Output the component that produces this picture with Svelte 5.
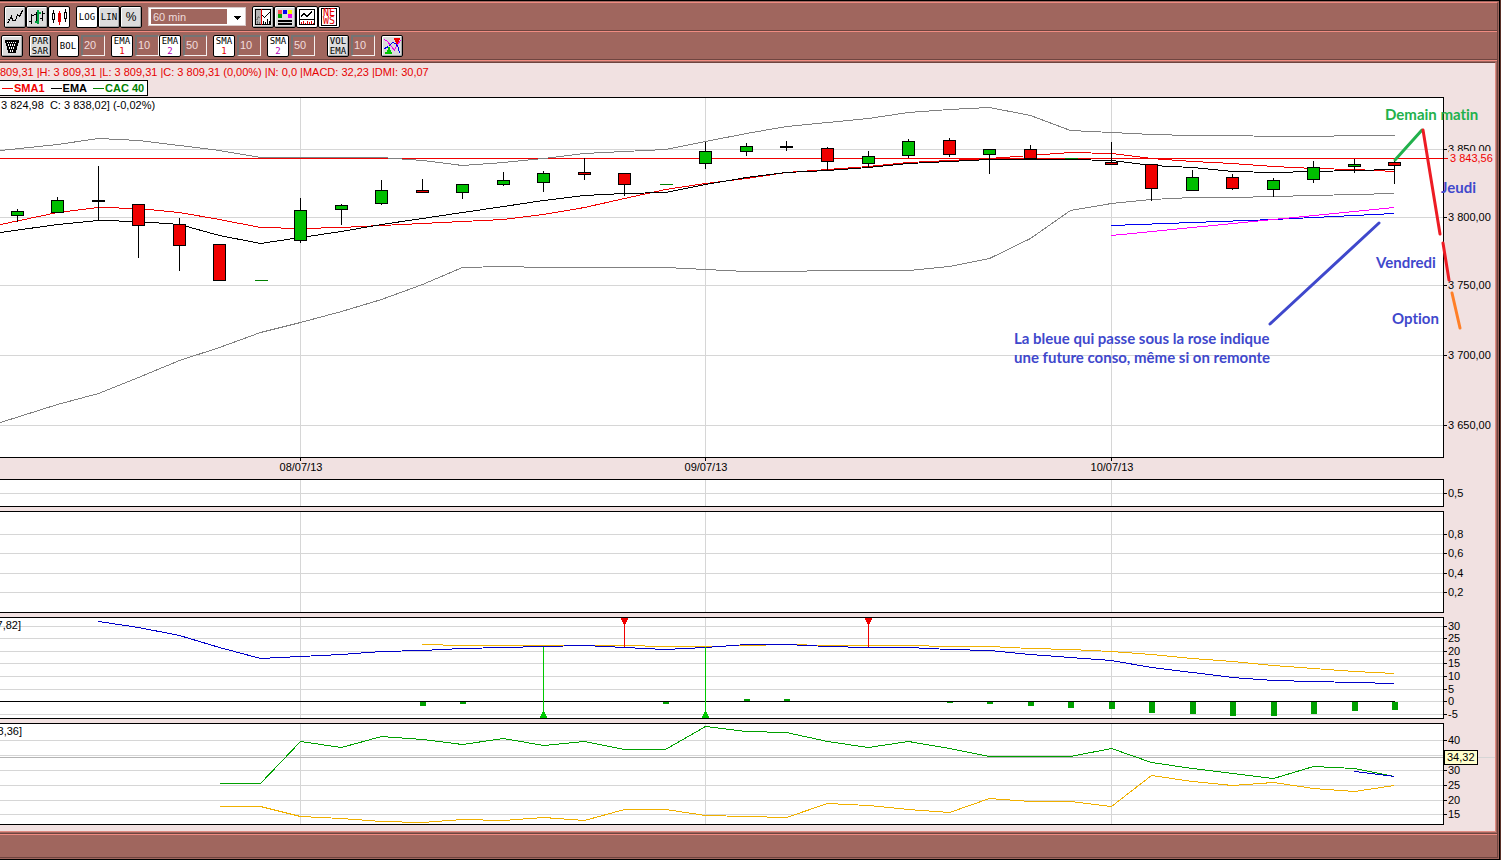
<script>
  let interval = '60 min';
  let scale = 'LOG';
  let style = 'candles';

  const styles = ['line', 'bars', 'candles'];
  const scales = ['LOG', 'LIN', '%'];
  const tools = ['crosshair', 'colors', 'volume', 'news'];

  let indicatorGroups = [
    [{ id: 'bol', lines: ['BOL'], on: true, value: '20' }],
    [
      { id: 'ema1', lines: ['EMA', '1'], color: '#e60000', on: true, value: '10' },
      { id: 'ema2', lines: ['EMA', '2'], color: '#b400b4', on: true, value: '50' }
    ],
    [{ id: 'sma1', lines: ['SMA', '1'], color: '#e60000', on: true, value: '10' }],
    [{ id: 'sma2', lines: ['SMA', '2'], color: '#b400b4', on: true, value: '50' }],
    [{ id: 'vol', lines: ['VOL', 'EMA'], on: false, value: '10', spaced: true }]
  ];

  const days = [
    { x: 300, label: '08/07/13' },
    { x: 705, label: '09/07/13' },
    { x: 1111, label: '10/07/13' }
  ];

  // one x for each hourly bar
  const xs = [
    17, 57, 98, 138, 179, 219, 260, 300, 341, 381, 422, 462, 503, 543, 584, 624, 665, 705,
    746, 786, 827, 868, 908, 949, 989, 1030, 1070, 1111, 1151, 1192, 1232, 1273, 1313, 1354, 1394
  ];

  // high, body top, body bottom, low, kind (u = up, d = down, n = doji, f = flat)
  const candles = [
    [209, 211, 215, 221, 'u'], [197, 200, 212, 212, 'u'], [166, 200, 201, 220, 'n'],
    [204, 204, 225, 257, 'd'], [218, 224, 245, 270, 'd'], [244, 244, 280, 280, 'd'],
    [280, 280, 280, 280, 'f'], [198, 210, 240, 242, 'u'], [204, 205, 209, 224, 'u'],
    [180, 190, 203, 204, 'u'], [179, 190, 192, 192, 'd'], [184, 184, 192, 198, 'u'],
    [172, 180, 184, 185, 'u'], [171, 173, 182, 191, 'u'], [158, 172, 174, 179, 'd'],
    [173, 173, 184, 195, 'd'], [184, 184, 184, 184, 'f'], [142, 151, 163, 168, 'u'],
    [143, 146, 151, 155, 'u'], [141, 146, 147, 150, 'n'], [147, 148, 161, 169, 'd'],
    [151, 156, 163, 166, 'u'], [139, 141, 155, 157, 'u'], [138, 140, 154, 156, 'd'],
    [149, 149, 154, 173, 'u'], [145, 149, 158, 158, 'd'], [158, 158, 158, 158, 'f'],
    [142, 162, 164, 164, 'd'], [164, 164, 188, 200, 'd'], [170, 177, 190, 190, 'u'],
    [174, 177, 188, 189, 'd'], [178, 180, 189, 196, 'u'], [161, 167, 179, 182, 'u'],
    [159, 164, 166, 172, 'u'], [160, 162, 165, 183, 'd']
  ];

  // values run along xs, starting at the given bar
  function series(start, values, lead = '') {
    return lead + ' ' + values.map((y, i) => `${xs[start + i]},${y}`).join(' ');
  }

  const upperBand = series(1, [
    144, 138, 140, 145, 150, 157, 157, 157, 157, 160, 165, 162, 158, 153, 151, 149, 141, 133,
    126, 122, 118, 112, 109, 107, 115, 130, 132, 134, 135, 135, 136, 136, 135, 135
  ], '0,150');
  const lowerBand = series(1, [
    404, 393, 377, 360, 347, 332, 322, 311, 299, 284, 267, 266, 267, 267, 267, 267, 269, 271,
    271, 270, 270, 270, 266, 258, 238, 210, 203, 199, 197, 197, 196, 195, 194, 193
  ], '0,422');
  const sma = series(1, [
    212, 207, 208, 212, 219, 227, 228, 227, 225, 223, 221, 219, 214, 207, 198, 189, 183, 178,
    172, 169, 166, 162, 160, 158, 155, 152, 153, 158, 161, 163, 166, 168, 169, 171
  ], '0,224');
  const ema = series(1, [
    224, 220, 221, 224, 235, 243, 237, 231, 224, 218, 212, 206, 200, 195, 193, 192, 184, 177,
    172, 170, 167, 163, 161, 159, 159, 159, 160, 165, 167, 171, 172, 171, 170, 169
  ], '0,232');

  const macd = series(2, [
    621, 627, 635, 647, 658, 656, 654, 651, 650, 648, 647, 646, 645, 647, 649, 647, 644, 644,
    646, 647, 647, 649, 650, 654, 657, 660, 667, 672, 677, 680, 681, 682, 683
  ]);
  const signal = series(10, [
    644, 645, 645, 645, 645, 645, 646, 646, 645, 644, 645, 645, 645, 646, 646, 648, 649, 651,
    654, 658, 661, 665, 668, 671, 673
  ]);
  const histogram = [
    [422, 702, 4], [462, 702, 2], [665, 702, 2], [746, 699, 2], [786, 699, 2], [949, 702, 1],
    [989, 702, 2], [1030, 702, 4], [1070, 702, 6], [1111, 702, 7], [1151, 702, 11],
    [1192, 702, 12], [1232, 702, 14], [1273, 702, 14], [1313, 702, 12], [1354, 702, 9],
    [1394, 702, 8]
  ];

  const diPlus = series(5, [
    783, 783, 741, 747, 736, 739, 744, 738, 745, 741, 749, 749, 726, 731, 732, 741, 747, 741,
    748, 756, 756, 756, 748, 762, 768, 773, 778, 766, 768, 776
  ]);
  const diMinus = series(5, [
    806, 806, 816, 818, 821, 822, 819, 820, 817, 820, 809, 809, 815, 816, 817, 803, 805, 809,
    812, 798, 801, 801, 806, 775, 781, 785, 782, 788, 791, 785
  ]);

  const panes = [
    {
      id: 'price', top: 97, height: 361,
      ticks: [[149, '3 850,00'], [217, '3 800,00'], [285, '3 750,00'], [355, '3 700,00'], [425, '3 650,00']]
    },
    { id: 'volume', top: 479, height: 28, ticks: [[493, '0,5']] },
    { id: 'empty', top: 511, height: 102, ticks: [[534, '0,8'], [553, '0,6'], [573, '0,4'], [592, '0,2']] },
    {
      id: 'macd', top: 617, height: 102,
      ticks: [[626, '30'], [638, '25'], [651, '20'], [663, '15'], [676, '10'], [689, '5'], [701, '0'], [714, '-5']]
    },
    {
      id: 'dmi', top: 723, height: 102,
      ticks: [[740, '40'], [755, ''], [770, '30'], [785, '25'], [800, '20'], [814, '15']]
    }
  ];

  function toggle(item) {
    item.on = !item.on;
    indicatorGroups = indicatorGroups;
  }
</script>

<div class="window">
  <div class="frame">
    <div class="toolbar">
      <div class="buttons">
        {#each styles as name}
          <button type="button" class:on={style === name} aria-label={name} on:click={() => (style = name)}>
            <svg width="20" height="20" shape-rendering="crispEdges" fill="none" stroke="#000">
              {#if name === 'line'}
                <path d="M2.5 16.5L6.5 9.5L7.5 13.5L10.5 13.5L12.5 7.5L14.5 9.5L17.5 3.5M2.5 12.5L4.5 12.5" />
              {:else if name === 'bars'}
                <path d="M4.5 7v10M2 14.5h2M5 8.5h2M9.5 5v11M7 7.5h2M15.5 4v10M13 11.5h2M16 6.5h2" />
                <path d="M11 3v14M8 14.5h3M11 5.5h3" stroke="#00a040" stroke-width="2" />
              {:else}
                <path d="M4.5 3v13M16.5 2v13" />
                <path d="M3.5 6.5h2v6h-2zM15.5 5.5h2v6h-2z" fill="#fff" />
                <path d="M10.5 4v14" stroke="#e60000" />
                <path d="M9.5 6.5h2v8h-2z" stroke="#e60000" fill="#e60000" />
              {/if}
            </svg>
          </button>
        {/each}
      </div>
      <div class="buttons">
        {#each scales as name}
          <button type="button" class:on={scale === name} class:percent={name === '%'} on:click={() => (scale = name)}>{name}</button>
        {/each}
      </div>
      <label class="interval">
        <select bind:value={interval} aria-label="Interval">
          <option>5 min</option>
          <option>15 min</option>
          <option>60 min</option>
        </select>
        <svg width="18" height="16" shape-rendering="crispEdges"><path d="M6 7h8l-4 4z" /></svg>
      </label>
      <div class="buttons">
        {#each tools as name}
          <button type="button" class:on={name === 'volume' || name === 'news'} aria-label={name}>
            {#if name === 'news'}
              <span class="news">NE<br />WS</span>
            {:else}
              <svg width="20" height="20" shape-rendering="crispEdges" fill="none" stroke="#000">
                {#if name === 'crosshair'}
                  <path d="M2.5 2.5h15v15h-15z" fill="#fff" />
                  <path d="M3 3h5v14h-5z" fill="#b4b4b4" stroke="none" />
                  <path d="M3.5 13.5l2-4 2 2M4.5 14v3M6.5 15v2" stroke="#777" />
                  <path d="M8.5 2v16" stroke="#e60000" />
                  <path d="M9.5 8.5l2 2 5-5M10.5 14v3M12.5 15v2M14.5 12v5M16.5 14v3" />
                {:else if name === 'colors'}
                  <g stroke="none">
                    <path d="M3 3h4v4h-4z" fill="#ff5050" />
                    <path d="M8 3h4v4h-4z" fill="#0000f0" />
                    <path d="M13 3h4v4h-4z" fill="#f5f500" />
                    <path d="M3 7h4v4h-4z" fill="#00a000" />
                    <path d="M13 7h4v4h-4z" fill="#f000f0" />
                  </g>
                  <path d="M3 14h14M3 17h14" stroke-width="2" />
                {:else}
                  <path d="M2.5 2.5h15v15h-15zM2 12.5h16" />
                  <path d="M4 9.5l3-3 3 3 5-5" />
                  <path d="M4.5 15v2M6.5 14v3M8.5 16v1M10.5 14v3M12.5 15v2M14.5 14v3M16.5 16v1" stroke="#e60000" />
                {/if}
              </svg>
            {/if}
          </button>
        {/each}
      </div>
    </div>

    <div class="toolbar second">
      <button type="button" aria-label="Indicators">
        <svg width="20" height="20" shape-rendering="crispEdges">
          <path d="M3 4h14v3h-1v3h-1v4h-1v3h-8v-3h-1v-4h-1v-3h-1z" />
          <path d="M5 6.5h10M6 9.5h8M7 12.5h6M8 15.5h4" stroke="#fff" stroke-dasharray="1 1" />
          <path d="M6 8h8M7 11h6M8 14h4" stroke="#fff" stroke-dasharray="1 1" />
        </svg>
      </button>
      <button type="button"><span>PAR</span><span>SAR</span></button>
      {#each indicatorGroups as group}
        <div class="buttons" class:spaced={group[0].spaced}>
          {#each group as item (item.id)}
            <div class="indicator">
              <button type="button" class:on={item.on} on:click={() => toggle(item)}>
                <span>{item.lines[0]}</span>
                {#if item.lines[1]}<span style:color={item.color}>{item.lines[1]}</span>{/if}
              </button>
              <input type="text" bind:value={item.value} aria-label={`${item.lines.join(' ')} period`} />
            </div>
          {/each}
        </div>
      {/each}
      <button type="button" aria-label="Signals">
        <svg width="20" height="20" shape-rendering="crispEdges" fill="none">
          <path d="M2.5 3.5l3 2 4 5 3 4 2-5 4-5" stroke="#f000f0" />
          <path d="M2.5 12.5l4-2 4-4 3 1 3 4 1 6" stroke="#0000f0" />
          <path d="M12 2h6v2h-1v2h-1v2h-2v-2h-1v-2h-1z" fill="#f00000" />
          <path d="M3 18h7v-2h-1v-2h-1v-3h-2v3h-1v2h-2z" fill="#00c800" />
        </svg>
      </button>
    </div>

    <div class="desk">
      <div class="charts">
        <div class="info">809,31 |H: 3 809,31 |L: 3 809,31 |C: 3 809,31 (0,00%) |N: 0,0 |MACD: 32,23 |DMI: 30,07</div>
        <div class="legend">
          <span class="sma">SMA1</span>
          <span class="ema">EMA</span>
          <span class="cac">CAC 40</span>
        </div>

        {#each panes as pane (pane.id)}
          <div class="pane" style:height={`${pane.height}px`}>
            <svg class="plot">
              <g transform={`translate(0 ${-pane.top - 1})`} shape-rendering="crispEdges">
                <g transform="translate(0.5 0.5)" fill="none">
                  <g class="grid">
                    {#each pane.ticks as [y]}
                      <line x1="-1" x2="100%" y1={y} y2={y} />
                    {/each}
                    {#each days as day}
                      <line x1={day.x} x2={day.x} y1={pane.top} y2={pane.top + pane.height} />
                    {/each}
                  </g>

                  {#if pane.id === 'price'}
                    <line x1="-1" x2="100%" y1="158" y2="158" stroke="#f00000" />
                    <polyline points={upperBand} stroke="#808080" />
                    <polyline points={lowerBand} stroke="#808080" />
                    <polyline points={sma} stroke="#f00000" />
                    <polyline points={ema} stroke="#000" />
                    <polyline points="1111,225 1273,219 1394,213" stroke="#0000f0" />
                    <polyline points="1111,235 1273,219 1394,207" stroke="#f0f" />
                    {#each candles as [high, top, bottom, low, kind], i}
                      {#if kind === 'f'}
                        <line x1={xs[i] - 6} x2={xs[i] + 7} y1={top} y2={top} stroke="#008000" />
                      {:else}
                        <path d={`M${xs[i]} ${high - 0.5}V${low + 0.5}`} stroke="#000" />
                        <rect class={kind} x={xs[i] - 6} y={top} width="12" height={bottom - top} stroke="#000" />
                      {/if}
                    {/each}
                  {:else if pane.id === 'macd'}
                    <line x1="-1" x2="1394" y1="701" y2="701" stroke="#000" />
                    <polyline points={signal} stroke="#f0b000" />
                    <polyline points={macd} stroke="#0000c8" />
                    <g stroke="#00c800" fill="#00c800">
                      <path d="M543 646V717M540 717h6l-2 -5h-2z" />
                      <path d="M705 646V717M702 717h6l-2 -5h-2z" />
                    </g>
                    <g stroke="#f00000" fill="#f00000">
                      <path d="M624 618V646M621 618h6l-2 5h-2z" />
                      <path d="M868 618V646M865 618h6l-2 5h-2z" />
                    </g>
                  {:else if pane.id === 'dmi'}
                    <line x1="-1" x2="100%" y1="757" y2="757" stroke="#b4b4b4" />
                    <polyline points={diPlus} stroke="#00a000" />
                    <polyline points={diMinus} stroke="#f0b000" />
                    <polyline points="1354,771 1394,776" stroke="#0000c8" />
                  {/if}
                </g>
                {#if pane.id === 'macd'}
                  {#each histogram as [x, y, h]}
                    <rect x={x - 2} {y} width="6" height={h} fill="#00a000" />
                  {/each}
                {/if}
              </g>
              {#if pane.id === 'price'}
                <text x="1" y="11" xml:space="preserve">3 824,98  C: 3 838,02] (-0,02%)</text>
              {:else if pane.id === 'macd'}
                <text x="21" y="11" text-anchor="end">7,82]</text>
              {:else if pane.id === 'dmi'}
                <text x="22" y="11" text-anchor="end">8,36]</text>
              {/if}
            </svg>
            <svg class="axis">
              <g transform={`translate(0 ${-pane.top})`}>
                {#each pane.ticks as [y, label]}
                  {#if label}
                    <rect {y} width="3" height="1" />
                    <text x="4" y={y + 4}>{label}</text>
                  {/if}
                {/each}
                {#if pane.id === 'price'}
                  <rect x="5" y="151" width="46" height="14" fill="#f1e1e1" />
                  <rect y="158" width="4" height="1" fill="#f00000" />
                  <text x="6" y="162" class="last">3 843,56</text>
                {:else if pane.id === 'dmi'}
                  <rect y="757" width="51" height="1" fill="#d6d6d6" />
                  <rect x="0.5" y="750.5" width="33" height="14" fill="#ffc" stroke="#000" />
                  <text x="3" y="761">34,32</text>
                {/if}
              </g>
            </svg>

            {#if pane.id === 'price'}
              <svg class="notes">
                <g transform="translate(0 -97)" fill="none" stroke-width="3" stroke-linecap="round">
                  <path d="M1395 160L1422 130" stroke="#22b14c" />
                  <path d="M1423 130L1440 234M1443 243L1449 280" stroke="#ed1c24" />
                  <path d="M1452 293L1460 328" stroke="#ff7f27" />
                  <path d="M1270 324L1379 223" stroke="#3f48cc" />
                </g>
                <g transform="translate(0 -97)" fill="#3f48cc">
                  <text x="1385" y="120" fill="#22b14c">Demain matin</text>
                  <text x="1441" y="193">Jeudi</text>
                  <text x="1376" y="268">Vendredi</text>
                  <text x="1392" y="324">Option</text>
                  <text x="1014" y="344">La bleue qui passe sous la rose indique</text>
                  <text x="1014" y="363">une future conso, même si on remonte</text>
                </g>
              </svg>
            {/if}
          </div>

          {#if pane.id === 'price'}
            <svg class="dates">
              {#each days as day}
                <rect x={day.x} width="1" height="3" />
                <text x={day.x + 1} y="13" text-anchor="middle">{day.label}</text>
              {/each}
            </svg>
          {/if}
        {/each}
      </div>
    </div>
    <div class="footer"></div>
  </div>
</div>

<style>
  :global(body) {
    background: #5a3228;
  }

  .window {
    box-sizing: border-box;
    display: flex;
    min-height: 100vh;
    margin-right: 1px;
    padding: 1px 1px 1px 0;
    border: 1px solid #000;
    border-left: none;
    background: #a0665e;
    color: #000;
    font: 11px/14px 'Liberation Sans', Arial, sans-serif;
  }

  .frame {
    flex: 1;
    min-width: 0;
    display: flex;
    flex-direction: column;
    border-top: 1px solid #f08c82;
    border-right: 1px solid #6e443f;
    border-bottom: 1px solid #6e443f;
  }

  .toolbar {
    display: flex;
    align-items: center;
    gap: 6px;
    height: 27px;
    padding-left: 4px;
    border-bottom: 1px solid #6e443f;
  }

  .toolbar.second {
    padding-left: 1px;
    border-top: 1px solid #f08c82;
  }

  .buttons,
  .indicator {
    display: flex;
    align-items: center;
  }

  .indicator {
    gap: 2px;
  }

  .spaced {
    margin-left: 6px;
  }

  button {
    box-sizing: border-box;
    display: flex;
    flex-direction: column;
    align-items: center;
    justify-content: center;
    width: 22px;
    height: 22px;
    padding: 0;
    border: 1px solid #000;
    border-radius: 2px;
    background: #dcdcdc;
    box-shadow: inset 1px 1px #fff, inset -1px -1px #a8a8a8;
    color: #000;
    font: 9px/10px 'DejaVu Sans Mono', monospace;
  }

  button.on {
    background: #fff;
    box-shadow: none;
  }

  .buttons button.percent {
    font: 12px/14px 'Liberation Sans', Arial, sans-serif;
  }

  button svg {
    flex: none;
  }

  .news {
    box-sizing: border-box;
    width: 16px;
    border: 1px solid #000;
    color: #e60000;
    font: 10px/8px 'DejaVu Sans Mono', monospace;
  }

  input {
    box-sizing: border-box;
    width: 24px;
    height: 21px;
    padding: 0 0 2px 1px;
    border: 2px solid;
    border-color: #747474 #f5f0f0 #f5f0f0 #747474;
    border-width: 2px 1px 1px 2px;
    border-radius: 0;
    background: #a0665e;
    color: #f0dcdc;
    font: 11px 'Liberation Sans', Arial, sans-serif;
  }

  .interval {
    display: flex;
    align-items: center;
    box-sizing: border-box;
    height: 19px;
    padding: 0 0 0 2px;
    border: 1px solid #d8c8c8;
    background: #fff;
  }

  select {
    width: 76px;
    height: 15px;
    padding: 0 0 0 2px;
    border: none;
    border-radius: 0;
    appearance: none;
    background: #a0665e;
    color: #f0dcdc;
    font: 11px 'Liberation Sans', Arial, sans-serif;
  }

  .desk {
    padding: 1px 1px 1px 0;
    border-top: 1px solid #f08c82;
    border-bottom: 1px solid #6e443f;
  }

  .charts {
    padding-bottom: 6px;
    border-top: 1px solid #6e443f;
    border-right: 1px solid #e08a80;
    border-bottom: 1px solid #e08a80;
    background: #f1e1e1;
  }

  .info {
    height: 17px;
    line-height: 19px;
    white-space: nowrap;
    color: #e60000;
  }

  .legend {
    box-sizing: border-box;
    display: flex;
    gap: 6px;
    width: 148px;
    height: 16px;
    margin-bottom: 1px;
    padding-left: 2px;
    border: 1px solid #000;
    border-left: none;
    background: #fff;
    font-weight: bold;
    white-space: nowrap;
  }

  .legend span {
    display: flex;
    align-items: center;
    gap: 1px;
  }

  .legend span::before {
    content: '';
    width: 11px;
    border-top: 1px solid;
  }

  .sma {
    color: #f00000;
  }

  .cac {
    color: #008000;
  }

  .pane {
    position: relative;
    display: flex;
    margin-bottom: 4px;
  }

  .pane:last-child,
  .pane:has(+ .dates) {
    margin-bottom: 0;
  }

  .plot {
    box-sizing: border-box;
    flex: 1;
    min-width: 0;
    height: 100%;
    border: 1px solid #000;
    border-left: none;
    background: #fff;
  }

  .axis {
    flex: none;
    width: 51px;
    height: 100%;
  }

  .grid {
    stroke: #d6d6d6;
  }

  .u {
    fill: #00be00;
  }

  .d {
    fill: #f00000;
  }

  .last {
    fill: #f00000;
  }

  .notes {
    position: absolute;
    inset: 0;
    width: 100%;
    height: 100%;
    pointer-events: none;
    font: bold 15px Lato, sans-serif;
    font-variant-ligatures: none;
  }

  .dates {
    display: block;
    width: 100%;
    height: 21px;
  }

  .footer {
    flex: 1;
    min-height: 22px;
    border-top: 1px solid #f08c82;
  }
</style>
